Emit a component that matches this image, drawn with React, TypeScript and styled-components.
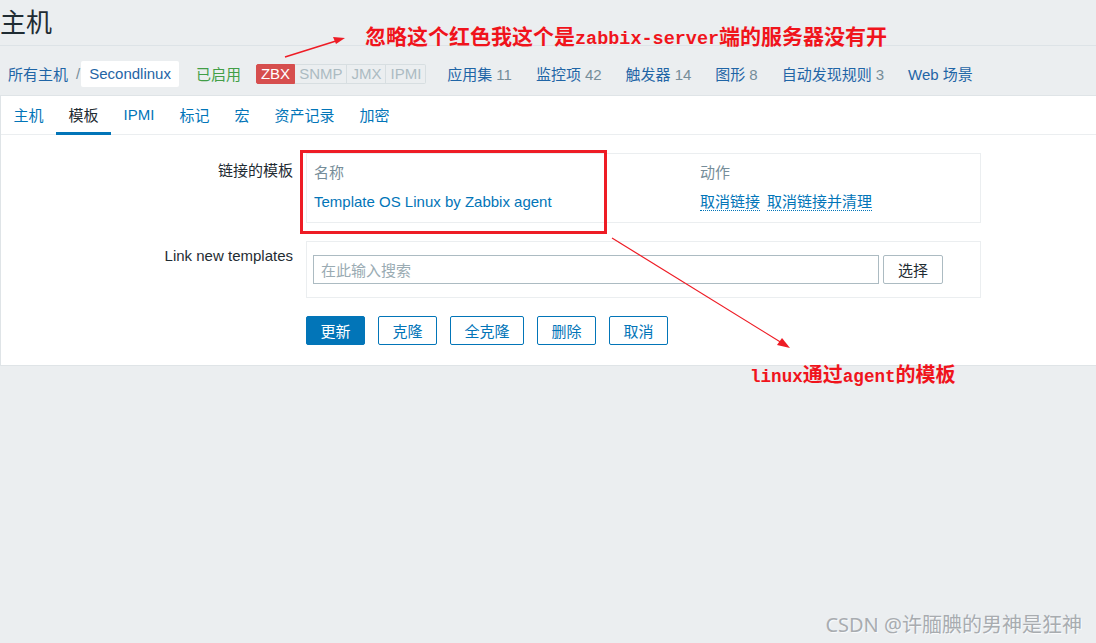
import styled, { createGlobalStyle } from 'styled-components'

const GlobalStyle = createGlobalStyle`
  *, *::before, *::after {
    box-sizing: border-box;
  }
  body {
    margin: 0;
    background: #ebeef0;
    font-family: "Liberation Sans", Arial, "Noto Sans CJK SC", sans-serif;
    font-size: 15px;
    color: #1f2c33;
  }
`

const Page = styled.div`
  position: relative;
  width: 1096px;
  height: 643px;
  overflow: hidden;
`

const Header = styled.header`
  height: 46px;
  display: flex;
  align-items: center;
  border-bottom: 1px solid #dde3e7;
`

const Title = styled.h1`
  margin: 0;
  font-size: 26px;
  font-weight: normal;
  color: #1f2c33;
  line-height: 1;
`

const NavBar = styled.nav`
  height: 49px;
  display: flex;
  align-items: center;
  padding: 6px 0 0 8px;
`

const Crumb = styled.a`
  color: #1f65a6;
  text-decoration: none;
`

const Separator = styled.span`
  color: #768d99;
  margin: 0 1px 0 8px;
`

const CurrentCrumb = styled.span`
  background: #fff;
  border-radius: 2px;
  color: #1f65a6;
  padding: 0 8px;
  height: 26px;
  display: flex;
  align-items: center;
`

const Enabled = styled.span`
  color: #429e47;
  margin-left: 17px;
`

const StatusGroup = styled.div`
  display: flex;
  margin-left: 15px;
  height: 20px;
`

const Status = styled.span<{ $error?: boolean }>`
  display: flex;
  align-items: center;
  padding: 0 4px;
  line-height: 1;
  font-size: 15px;
  background: ${(p) => (p.$error ? '#d64e4e' : '#ebeef0')};
  color: ${(p) => (p.$error ? '#fff' : '#acbbc2')};
  border: 1px solid ${(p) => (p.$error ? '#d64e4e' : '#d7dee1')};
  border-left-width: ${(p) => (p.$error ? '1px' : '0')};
  &:first-child {
    border-radius: 2px 0 0 2px;
  }
  &:last-child {
    border-radius: 0 2px 2px 0;
  }
`

const NavLink = styled.a`
  color: #1f65a6;
  text-decoration: none;
  margin-left: 21px;
  white-space: nowrap;
  & + & {
    margin-left: 24px;
  }
`

const Count = styled.span`
  color: #768d99;
  margin-left: 4px;
`

const Panel = styled.section`
  background: #fff;
  border-top: 1px solid #dfe4e7;
  border-bottom: 1px solid #dfe4e7;
  border-left: 1px solid #dfe4e7;
  padding-bottom: 20px;
`

const TabBar = styled.ul`
  list-style: none;
  margin: 0;
  padding: 0;
  display: flex;
  height: 39px;
  border-bottom: 1px solid #ebeef0;
`

const Tab = styled.li<{ $active?: boolean }>`
  padding: 0 12.5px;
  display: flex;
  align-items: center;
  color: ${(p) => (p.$active ? '#1f2c33' : '#0275b8')};
  border-bottom: 3px solid ${(p) => (p.$active ? '#0275b8' : 'transparent')};
  margin-bottom: -1px;
  height: 39px;
  padding-top: 1px;
`

const Form = styled.div`
  padding-top: 18px;
  display: flex;
  flex-direction: column;
  gap: 18px;
`

const FormRow = styled.div`
  display: grid;
  grid-template-columns: 292px 675px;
  column-gap: 13px;
`

const Label = styled.div`
  text-align: right;
  padding-top: 6px;
  color: #1f2c33;
`

const Box = styled.div`
  border: 1px solid #ebeef0;
`

const TemplateTable = styled.div`
  display: grid;
  grid-template-columns: 386px 1fr;
  padding: 7px 7px 11px;
  row-gap: 11px;
`

const HeadCell = styled.div`
  color: #768d99;
`

const TemplateLink = styled.a`
  color: #0275b8;
  text-decoration: none;
`

const Actions = styled.div`
  display: flex;
  gap: 7px;
`

const ActionLink = styled.a`
  color: #0275b8;
  text-decoration: none;
  border-bottom: 1px dotted #0275b8;
  line-height: 1.15;
`

const SearchRow = styled.div`
  display: flex;
  gap: 4px;
  padding: 13px 6px;
`

const SearchInput = styled.div`
  width: 566px;
  height: 29px;
  border: 1px solid #acbbc2;
  display: flex;
  align-items: center;
  padding-left: 7px;
  color: #9aabb3;
`

const SelectButton = styled.button`
  width: 60px;
  height: 29px;
  border: 1px solid #acbbc2;
  border-radius: 2px;
  background: #fff;
  color: #1f2c33;
  font: inherit;
  padding: 0;
`

const ButtonRow = styled.div`
  display: flex;
  gap: 13px;
  grid-column: 2;
`

const Button = styled.button<{ $primary?: boolean }>`
  height: 29px;
  padding: 0 13.5px;
  border: 1px solid #0275b8;
  border-radius: 2px;
  font: inherit;
  background: ${(p) => (p.$primary ? '#0275b8' : '#fff')};
  color: ${(p) => (p.$primary ? '#fff' : '#0275b8')};
`

const Overlay = styled.svg`
  position: absolute;
  left: 0;
  top: 0;
  pointer-events: none;
`

const Note = styled.div<{ $size: number }>`
  position: absolute;
  color: #f0141c;
  font-family: "Liberation Serif", "Noto Sans CJK SC", serif;
  font-weight: bold;
  font-size: ${(p) => p.$size}px;
  white-space: nowrap;
  line-height: 1;
`

const NoteLatin = styled.span`
  font-family: "Liberation Mono", monospace;
  font-size: 0.88em;
  font-weight: bold;
`

const Watermark = styled.div`
  position: absolute;
  right: 14px;
  bottom: 5px;
  font-size: 20px;
  color: #a8acb0;
  text-shadow: 1px 1px 1px rgba(255, 255, 255, 0.8);
  font-family: "Noto Sans", "Noto Sans CJK SC", sans-serif;
`

const tabs = ['主机', '模板', 'IPMI', '标记', '宏', '资产记录', '加密']
const navLinks: [string, string?][] = [
  ['应用集', '11'],
  ['监控项', '42'],
  ['触发器', '14'],
  ['图形', '8'],
  ['自动发现规则', '3'],
  ['Web 场景'],
]

const App = () => {
  return (
    <Page>
      <GlobalStyle />
      <Header>
        <Title>主机</Title>
      </Header>

      <NavBar>
        <Crumb>所有主机</Crumb>
        <Separator>/</Separator>
        <CurrentCrumb>Secondlinux</CurrentCrumb>
        <Enabled>已启用</Enabled>
        <StatusGroup>
          <Status $error>ZBX</Status>
          <Status>SNMP</Status>
          <Status>JMX</Status>
          <Status>IPMI</Status>
        </StatusGroup>
        {navLinks.map(([name, count]) => (
          <NavLink key={name}>
            {name}
            {count && <Count>{count}</Count>}
          </NavLink>
        ))}
      </NavBar>

      <Panel>
        <TabBar>
          {tabs.map((t) => (
            <Tab key={t} $active={t === '模板'}>
              {t}
            </Tab>
          ))}
        </TabBar>

        <Form>
          <FormRow>
            <Label>链接的模板</Label>
            <Box>
              <TemplateTable>
                <HeadCell>名称</HeadCell>
                <HeadCell>动作</HeadCell>
                <TemplateLink>Template OS Linux by Zabbix agent</TemplateLink>
                <Actions>
                  <ActionLink>取消链接</ActionLink>
                  <ActionLink>取消链接并清理</ActionLink>
                </Actions>
              </TemplateTable>
            </Box>
          </FormRow>

          <FormRow>
            <Label>Link new templates</Label>
            <Box>
              <SearchRow>
                <SearchInput>在此输入搜索</SearchInput>
                <SelectButton>选择</SelectButton>
              </SearchRow>
            </Box>
          </FormRow>

          <FormRow>
            <ButtonRow>
              <Button $primary>更新</Button>
              <Button>克隆</Button>
              <Button>全克隆</Button>
              <Button>删除</Button>
              <Button>取消</Button>
            </ButtonRow>
          </FormRow>
        </Form>
      </Panel>

      <Overlay width="1096" height="643" viewBox="0 0 1096 643">
        <rect x="301.5" y="151.5" width="304" height="81" fill="none" stroke="#ee1c25" strokeWidth="3" />
        <line x1="285" y1="57" x2="336" y2="41" stroke="#ee1c25" strokeWidth="1.5" />
        <polygon points="345,38 333,37 336,44" fill="#ee1c25" />
        <line x1="612" y1="238" x2="782" y2="343" stroke="#ee1c25" strokeWidth="1.2" />
        <polygon points="790,348 777,345 782,338" fill="#ee1c25" />
      </Overlay>

      <Note $size={21} style={{ left: 365, top: 27 }}>
        忽略这个红色我这个是<NoteLatin>zabbix-server</NoteLatin>端的服务器没有开
      </Note>
      <Note $size={20} style={{ left: 750, top: 365 }}>
        <NoteLatin>linux</NoteLatin>通过<NoteLatin>agent</NoteLatin>的模板
      </Note>

      <Watermark>CSDN @许腼腆的男神是狂神</Watermark>
    </Page>
  )
}

export default App
